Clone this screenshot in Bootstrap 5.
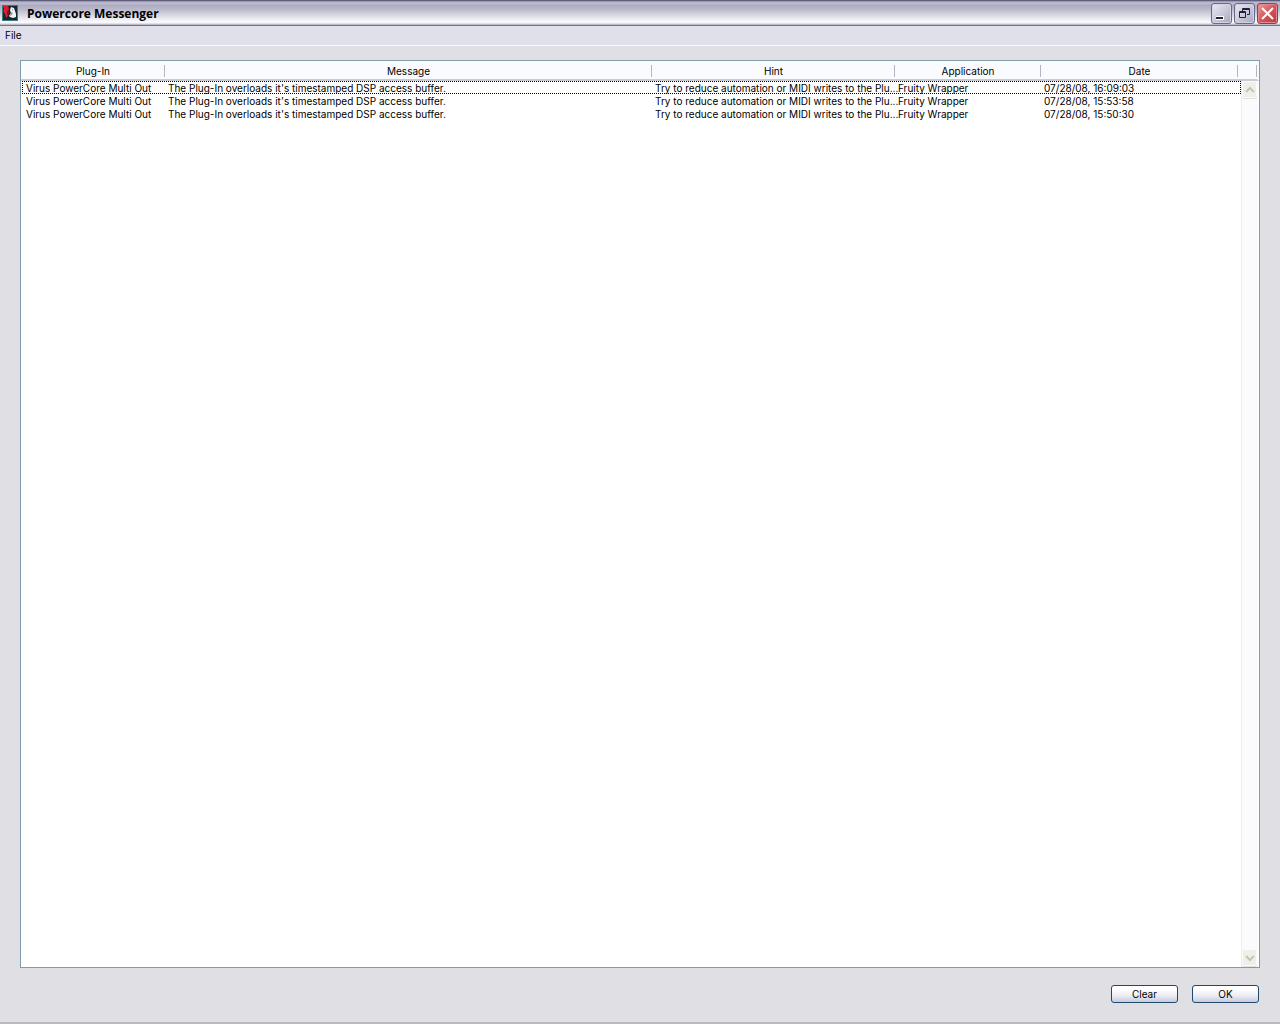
<!DOCTYPE html>
<html lang="en">
<head>
<meta charset="utf-8">
<meta name="viewport" content="width=device-width, initial-scale=1">
<title>Powercore Messenger</title>
<link href="https://cdn.jsdelivr.net/npm/bootstrap@5.3.0/dist/css/bootstrap.min.css" rel="stylesheet">
<style>
body { font-family: Inter, "Liberation Sans", sans-serif; font-size: 10px; line-height: 13px; color: #000; background: #dfdfe4; }
.titlebar { height: 26px; padding: 0 2px; border-top: 1px solid #5f5c7c; border-bottom: 1px solid #74728c;
  background: linear-gradient(#8f8da8 0, #c4c3d4 2px, #acabc1 4px, #b8b7ca 8px, #dcdce6 15px, #fbfbfd 21px, #f4f4f8 22px, #a9a8ba 24px); }
.titlebar h1 { font-family: "Open Sans", sans-serif; font-size: 12px; line-height: 24px; padding: 1px 0 0 9px; }
.winbtns { gap: 2px; }
.winbtn { width: 21px; height: 21px; border: 1px solid #666a8c; border-radius: 3px; background: linear-gradient(135deg, #e9e9f3, #c4c4d6 60%, #a6a6c0); box-shadow: inset 0 0 0 1px #d3d3e2; }
.winbtn.closer { border-color: #9a3b48; background: linear-gradient(135deg, #eda09b, #d4545a 50%, #b93b47); box-shadow: inset 0 0 0 1px #e08a8c; }
.menubar { height: 20px; background: #dfe0e9; border-bottom: 1px solid #fafafc; }
.menubar a { line-height: 18px; padding-left: 5px; }
.workspace { padding: 14px 20px 19px; border-bottom: 2px solid #b9b9bf; }
.listbox { border: 1px solid #7f9dab; background: #fff; }
.messages { table-layout: fixed; width: 100%; white-space: nowrap; border-collapse: separate; border-spacing: 0; }
.messages th { height: 20px; padding: 2px 0 0; text-align: center; font-weight: 400; border-bottom: 2px solid #c9cad2;
  background: linear-gradient(#b4b5c2, #b4b5c2) 100% 4px / 1px 12px no-repeat, #fafbff; }
.messages td { height: 13px; line-height: 12px; padding: 1px 0 0 3px; }
.messages td:first-child { padding-left: 5px; }
.col-plugin { width: 144px; }
.col-hint { width: 243px; }
.col-app { width: 146px; }
.col-date { width: 197px; }
.col-end { width: 21px; }
.messages th.endcap { border-right: 2px solid #fafbff; }
.focused { position: relative; }
.focused td:first-child::after { content: ""; position: absolute; inset: 0 18px 0 1px; border: 1px dotted #000; }
.scroller { position: absolute; top: 20px; right: 0; bottom: 0; width: 18px; padding-bottom: 1px; background: #fbfbfd; border-left: 1px solid #eeeeea; border-right: 1px solid #fff; }
.scroller button { width: 15px; height: 17px; background: #efeee8; border: 1px solid #fbfbf8; border-radius: 2px; box-shadow: 0 1px 0 #e0e0dc; }
.actions { gap: 14px; padding: 17px 1px 0 0; }
.actions .btn { width: 67px; height: 18px; padding: 0; font-size: 10px; line-height: 16px; color: #000; border: 1px solid #1f4a70; border-radius: 3px;
  background: linear-gradient(#fff 20%, #ececf5 60%, #c9cadc); }
</style>
</head>
<body class="d-flex flex-column vh-100 overflow-hidden">
<header class="titlebar d-flex align-items-center flex-shrink-0">
  <svg width="16" height="16" viewBox="0 0 16 16" aria-hidden="true">
    <path fill="#15272e" d="M0 0h16v16H0z"/>
    <path fill="#3c7b83" d="M0 0h16v1H0zM0 0h1v16H0zM0 15h16v1H0zM15 0h1v16h-1z"/>
    <path fill="#dd1c2b" d="M1 1h5l1 3-2 3 1 4-2 2-1-4-2-3 1-2z"/>
    <path fill="#8b1220" d="M5 7l2-2v4l-1 2z"/>
    <path fill="#f3f5f4" d="M9 2l3 1 1 3 1 3v3l-3 1-3-1-1-1 2-3-1-3z"/>
    <path fill="#8fa3a6" d="M9 7l2 1-1 2-2 1zM10 3l1 2-1 1z"/>
  </svg>
  <h1 class="m-0 fw-bold flex-grow-1">Powercore Messenger</h1>
  <div class="winbtns d-flex">
    <button type="button" class="winbtn p-0 d-flex" aria-label="Minimize">
      <svg width="19" height="19" aria-hidden="true"><path fill="#fff" d="M4 12h8v4H4z"/><path fill="#20203c" d="M4 13h7v2H4z"/></svg></button>
    <button type="button" class="winbtn p-0 d-flex" aria-label="Restore">
      <svg width="19" height="19" aria-hidden="true"><path fill="none" stroke="#20203c" d="M7.500 7V4.500h7v6H12M7 5.500h8M4.500 7.500h6v6h-6zM4 8.500h7"/></svg></button>
    <button type="button" class="winbtn closer p-0 d-flex" aria-label="Close">
      <svg width="19" height="19" aria-hidden="true"><path stroke="#fff" stroke-width="2" d="M4 4l11 11M15 4L4 15"/></svg></button>
  </div>
</header>
<nav class="menubar flex-shrink-0"><a href="#" class="text-black text-decoration-none d-inline-block">File</a></nav>
<main class="workspace d-flex flex-column flex-grow-1">
  <div class="listbox position-relative flex-grow-1">
    <table class="messages">
      <colgroup><col class="col-plugin"><col><col class="col-hint"><col class="col-app"><col class="col-date"><col class="col-end"></colgroup>
      <thead><tr><th scope="col">Plug-In</th><th scope="col">Message</th><th scope="col">Hint</th><th scope="col">Application</th><th scope="col">Date</th><th class="endcap"></th></tr></thead>
      <tbody>
        <tr class="focused"><td>Virus PowerCore Multi Out</td><td>The Plug-In overloads it's timestamped DSP access buffer.</td><td>Try to reduce automation or MIDI writes to the Plu...</td><td>Fruity Wrapper</td><td>07/28/08, 16:09:03</td><td></td></tr>
        <tr><td>Virus PowerCore Multi Out</td><td>The Plug-In overloads it's timestamped DSP access buffer.</td><td>Try to reduce automation or MIDI writes to the Plu...</td><td>Fruity Wrapper</td><td>07/28/08, 15:53:58</td><td></td></tr>
        <tr><td>Virus PowerCore Multi Out</td><td>The Plug-In overloads it's timestamped DSP access buffer.</td><td>Try to reduce automation or MIDI writes to the Plu...</td><td>Fruity Wrapper</td><td>07/28/08, 15:50:30</td><td></td></tr>
      </tbody>
    </table>
    <div class="scroller d-flex flex-column justify-content-between">
      <button type="button" class="p-0 d-flex" aria-label="Scroll up"><svg width="13" height="15" aria-hidden="true"><path fill="none" stroke="#c5c4b6" stroke-width="2" d="M3 10l4-4 4 4"/></svg></button>
      <button type="button" class="p-0 d-flex" aria-label="Scroll down"><svg width="13" height="15" aria-hidden="true"><path fill="none" stroke="#c5c4b6" stroke-width="2" d="M3 6l4 4 4-4"/></svg></button>
    </div>
  </div>
  <div class="actions d-flex justify-content-end">
    <button type="button" class="btn">Clear</button>
    <button type="button" class="btn">OK</button>
  </div>
</main>
<script src="https://cdn.jsdelivr.net/npm/bootstrap@5.3.0/dist/js/bootstrap.bundle.min.js"></script>
</body>
</html>
